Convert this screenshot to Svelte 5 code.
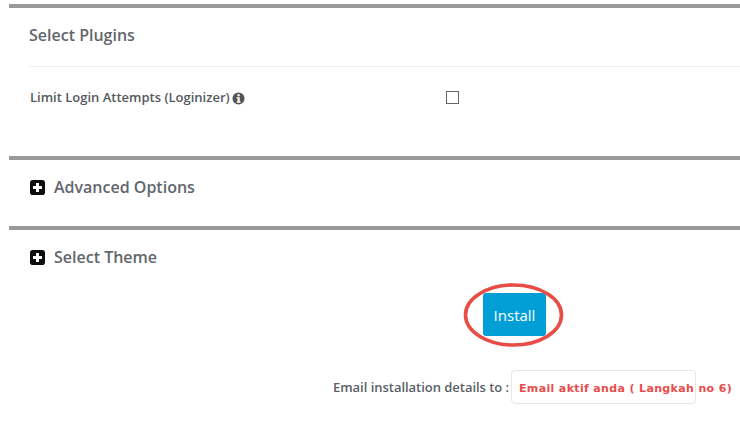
<script lang="ts">
  const plugins = [{ name: 'Limit Login Attempts (Loginizer)' }];
</script>

<div class="page">
  <section class="plugins">
    <h3>Select Plugins</h3>
    {#each plugins as plugin}
      <div class="plugin">
        <span class="label">
          {plugin.name}
          <svg class="info" viewBox="0 0 14 14" aria-hidden="true">
            <circle cx="7" cy="7" r="6.5" fill="#555" />
            <rect x="5.9" y="2.4" width="2.4" height="2.2" fill="#fff" />
            <path d="M5 5.6h3.3v4.6h1v1.3H5v-1.3h1V6.9H5z" fill="#fff" />
          </svg>
        </span>
        <span class="check"></span>
      </div>
    {/each}
  </section>

  <section class="advanced">
    <h3 class="toggle">
      <svg class="plus" viewBox="0 0 16 16" aria-hidden="true">
        <rect width="16" height="16" rx="3" fill="#0d0d0d" />
        <path d="M6.4 3.2h3.2v3.2h3.2v3.2H9.6v3.2H6.4V9.6H3.2V6.4h3.2z" fill="#fff" />
      </svg>
      Advanced Options
    </h3>
  </section>

  <section class="theme">
    <h3 class="toggle">
      <svg class="plus" viewBox="0 0 16 16" aria-hidden="true">
        <rect width="16" height="16" rx="3" fill="#0d0d0d" />
        <path d="M6.4 3.2h3.2v3.2h3.2v3.2H9.6v3.2H6.4V9.6H3.2V6.4h3.2z" fill="#fff" />
      </svg>
      Select Theme
    </h3>
    <div class="submit">
      <div class="install-wrap">
        <button type="button" class="install">Install</button>
        <svg class="oval" viewBox="0 0 100 64" aria-hidden="true">
          <ellipse cx="50" cy="32" rx="48" ry="30" fill="none" stroke="#e84c45" stroke-width="3.6" />
        </svg>
      </div>
    </div>
    <div class="email">
      <span class="email-label">Email installation details to :</span>
      <span class="email-input">Email aktif anda ( Langkah no 6)</span>
    </div>
  </section>
</div>

<style>
  :global(body) {
    margin: 0;
    background: #fff;
  }

  .page {
    width: 740px;
    height: 434px;
    padding: 4px 0 0 9px;
    box-sizing: border-box;
    overflow: hidden;
    font-family: "Open Sans", "Liberation Sans", sans-serif;
    color: #5f6368;
  }

  section {
    border-top: 4px solid #999;
  }

  h3 {
    margin: 0;
    font-size: 16px;
    font-weight: 600;
    line-height: 22px;
    color: #62666c;
  }

  .plugins {
    height: 148px;
    padding-left: 20px;
  }

  .plugins h3 {
    padding: 16px 0 20px;
    border-bottom: 1px solid #eee;
  }

  .plugin {
    display: flex;
    align-items: center;
    height: 20px;
    margin-top: 20px;
  }

  .label {
    display: flex;
    align-items: center;
    gap: 2px;
    width: 416px;
    padding-left: 1px;
    font-size: 13px;
    font-weight: 600;
    color: #555a60;
    white-space: nowrap;
  }

  .info {
    width: 13px;
    height: 13px;
    margin-top: 3px;
  }

  .check {
    width: 11px;
    height: 11px;
    border: 1px solid #666;
  }

  .advanced {
    height: 66px;
    padding-left: 21px;
  }

  .toggle {
    display: flex;
    align-items: center;
    gap: 9px;
    padding-top: 16px;
  }

  .plus {
    width: 15px;
    height: 15px;
    flex: none;
  }

  .theme {
    padding-left: 21px;
  }

  .submit {
    display: flex;
    padding: 25px 0 0 453px;
  }

  .install-wrap {
    position: relative;
  }

  .install {
    display: block;
    width: 63px;
    height: 43px;
    padding: 0;
    border: 0;
    border-radius: 3px;
    background: #029fd6;
    color: #fff;
    font-family: inherit;
    font-size: 15px;
  }

  .oval {
    position: absolute;
    left: -21px;
    top: -10px;
    width: 103px;
    height: 64px;
    pointer-events: none;
  }

  .email {
    display: flex;
    align-items: center;
    margin: 34px 0 0 303px;
    white-space: nowrap;
  }

  .email-label {
    width: 178px;
    font-size: 13px;
    letter-spacing: -0.03px;
    font-weight: 600;
    color: #5a5f66;
  }

  .email-input {
    box-sizing: border-box;
    width: 185px;
    height: 34px;
    padding: 0 0 0 7px;
    border: 1px solid #e6e6e6;
    border-radius: 4px;
    font-family: "DejaVu Sans", Verdana, sans-serif;
    font-size: 11px;
    font-weight: 700;
    line-height: 35px;
    letter-spacing: 0.35px;
    color: #ea4c4c;
  }
</style>
